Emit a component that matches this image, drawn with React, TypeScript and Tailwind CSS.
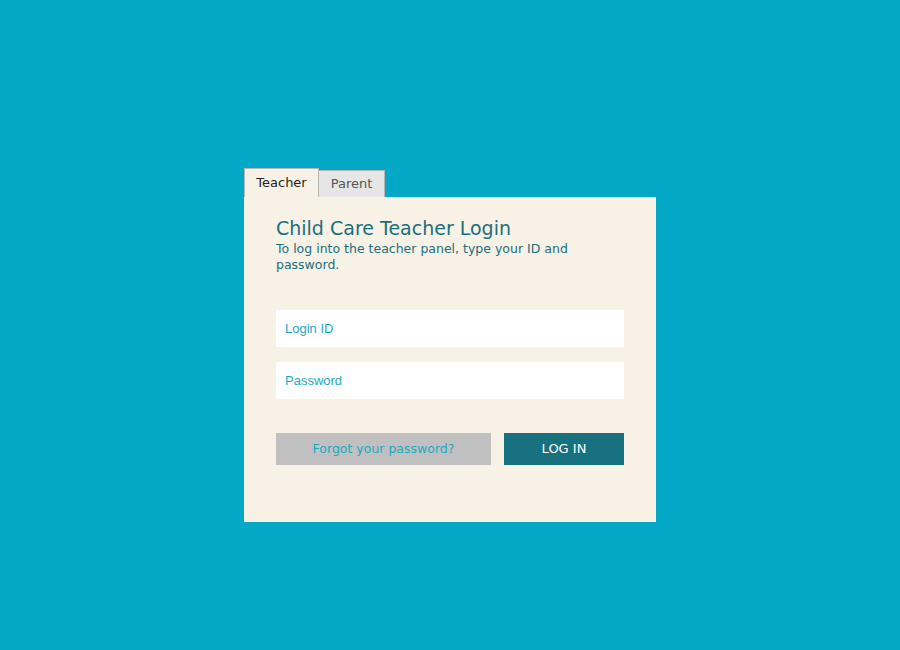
export default function App() {
  return (
    <div className="min-h-[650px] w-full bg-[#02a8c6] flex justify-center pt-[168px] font-['DejaVu_Sans',Verdana,sans-serif]">
      <div className="w-[412px] flex flex-col">
        <div className="flex items-end h-[29px]">
          <div className="h-[29px] w-[75px] bg-[#f8f1e6] border border-b-0 border-[#b5b5b5] flex items-center justify-center text-[13px] text-[#222]">
            Teacher
          </div>
          <div className="h-[27px] w-[66px] bg-[#e6e6e6] border border-b-0 border-l-0 border-[#b5b5b5] flex items-center justify-center text-[13px] text-[#555]">
            Parent
          </div>
        </div>
        <div className="bg-[#f8f1e6] h-[325px] px-[32px] pt-[19px]">
          <h1 className="text-[19px] leading-[24px] text-[#1a6f7d]">Child Care Teacher Login</h1>
          <p className="text-[12.5px] leading-[16px] text-[#1a6f7d] mt-[1px] pr-[40px]">
            To log into the teacher panel, type your ID and password.
          </p>
          <form className="mt-[37px] flex flex-col gap-[15px]">
            <input
              placeholder="Login ID"
              className="h-[37px] w-full bg-white px-[9px] text-[13px] font-['Liberation_Sans',Arial,sans-serif] outline-none placeholder:text-[#1ea8c4]"
            />
            <input
              type="password"
              placeholder="Password"
              className="h-[37px] w-full bg-white px-[9px] text-[13px] font-['Liberation_Sans',Arial,sans-serif] outline-none placeholder:text-[#1ea8c4]"
            />
          </form>
          <div className="mt-[34px] flex justify-between">
            <button className="h-[32px] w-[215px] bg-[#c0c0c0] text-[12.5px] text-[#1ea8c4]">
              Forgot your password?
            </button>
            <button className="h-[32px] w-[120px] bg-[#18717f] text-[13px] text-white">
              LOG IN
            </button>
          </div>
        </div>
      </div>
    </div>
  );
}
